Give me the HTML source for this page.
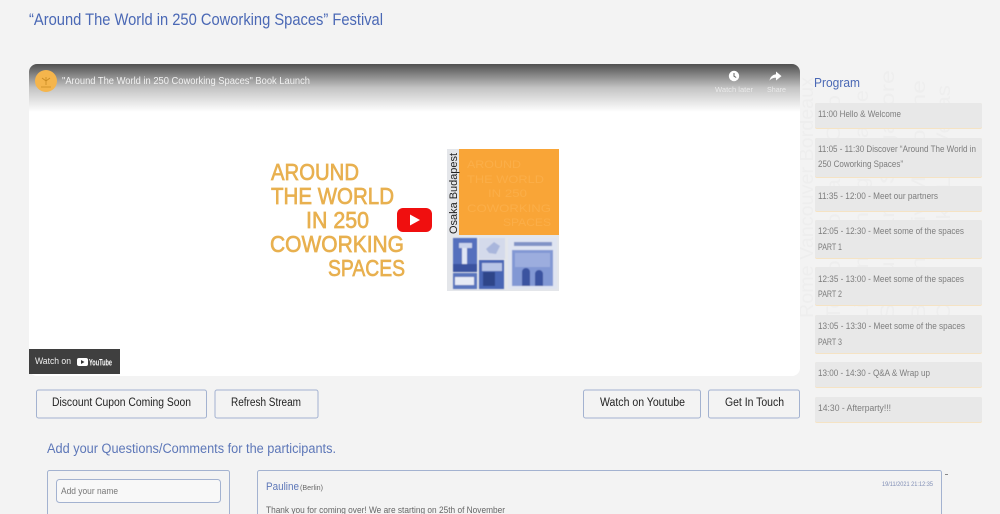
<!DOCTYPE html>
<html lang="en"><head><meta charset="utf-8"><title>Festival</title>
<style>
html,body{margin:0;padding:0;width:1000px;height:514px;overflow:hidden;background:#f3f3f3}
svg{display:block;position:absolute;left:0;top:0}
text{font-family:"Liberation Sans",sans-serif}
.s{font-size:9.3px;fill:#7d7d7d}
.b{font-size:11.5px;fill:#222}
.w{font-size:19px;fill:#eeeeee}
.box{fill:#e8e8e8}
.line{fill:#f5e3c4}
.btn{fill:#f3f3f3;stroke:#a3b2d0;stroke-width:1}
.big{font-size:23px;fill:#e8b04f;stroke:#e8b04f;stroke-width:.7px}
</style></head><body>
<svg width="1000" height="514" viewBox="0 0 1000 514" xmlns="http://www.w3.org/2000/svg">
<defs>
<linearGradient id="g" x1="0" y1="0" x2="0" y2="1"><stop offset="0" stop-color="#505050"/><stop offset=".5" stop-color="#c4c4c4"/><stop offset="1" stop-color="#fff"/></linearGradient>
<filter id="bl" x="-5%" y="-5%" width="110%" height="110%"><feGaussianBlur stdDeviation=".5"/></filter>
</defs>
<rect width="1000" height="514" fill="#f3f3f3"/>

<!-- watermark -->
<text class="w" transform="translate(813,318) rotate(-90)" textLength="241" lengthAdjust="spacingAndGlyphs">Rome Vancouver Bordeaux</text>
<text class="w" transform="translate(840,320) rotate(-90)" textLength="225" lengthAdjust="spacingAndGlyphs">Tokyo Sao Paulo Oslo</text>
<text class="w" transform="translate(868,320) rotate(-90)" textLength="230" lengthAdjust="spacingAndGlyphs">Lisbon Santiago Prague</text>
<text class="w" transform="translate(894,320) rotate(-90)" textLength="250" lengthAdjust="spacingAndGlyphs">Seoul Paris Singapore</text>
<text class="w" transform="translate(925,320) rotate(-90)" textLength="240" lengthAdjust="spacingAndGlyphs">Berlin Kyiv Melbourne</text>
<text class="w" transform="translate(950,320) rotate(-90)" textLength="235" lengthAdjust="spacingAndGlyphs">Cairo Osaka Las Vegas</text>

<text x="29" y="25" font-size="17" fill="#4a68b5" textLength="354" lengthAdjust="spacingAndGlyphs">“Around The World in 250 Coworking Spaces” Festival</text>

<!-- video -->
<rect x="29" y="64" width="771" height="312" rx="8" fill="#fff"/>
<path d="M29 112V72a8 8 0 0 1 8-8H792a8 8 0 0 1 8 8V112Z" fill="url(#g)"/>
<circle cx="46" cy="81" r="11" fill="#f5b54c"/>
<path d="M46 85v-8M42 78l4 3 4-3M41 87h10" stroke="#c98a22" stroke-width=".8" fill="none"/>
<text x="62" y="84" font-size="10" fill="#f1f1f1" textLength="248" lengthAdjust="spacingAndGlyphs">"Around The World in 250 Coworking Spaces" Book Launch</text>
<circle cx="734" cy="76" r="5.2" fill="#fff"/>
<path d="M734 73v3.2l2.2 1.3" stroke="#666" stroke-width="1" fill="none"/>
<path d="M776 71.500l5.500 4.600-5.500 4.400v-2.700c-3 0-5 .9-6.500 3 .5-3.400 2.600-6 6.500-6.600Z" fill="#fff"/>
<text x="715" y="92" font-size="7.500" fill="#e9e9e9" textLength="38" lengthAdjust="spacingAndGlyphs">Watch later</text>
<text x="767" y="92" font-size="7.500" fill="#e9e9e9" textLength="19" lengthAdjust="spacingAndGlyphs">Share</text>

<text class="big" x="271" y="180" textLength="88" lengthAdjust="spacingAndGlyphs">AROUND</text>
<text class="big" x="271" y="204" textLength="123" lengthAdjust="spacingAndGlyphs">THE WORLD</text>
<text class="big" x="306" y="228" textLength="63" lengthAdjust="spacingAndGlyphs">IN 250</text>
<text class="big" x="270" y="252" textLength="134" lengthAdjust="spacingAndGlyphs">COWORKING</text>
<text class="big" x="328" y="276" textLength="77" lengthAdjust="spacingAndGlyphs">SPACES</text>

<!-- book -->
<rect x="447" y="149" width="112" height="142" fill="#e4e6ea"/>
<rect x="459" y="149" width="100" height="86" fill="#f9a537"/>
<g font-size="11" fill="#fbae48">
<text x="467" y="168" textLength="54" lengthAdjust="spacingAndGlyphs">AROUND</text>
<text x="467" y="183" textLength="77" lengthAdjust="spacingAndGlyphs">THE WORLD</text>
<text x="488" y="197" textLength="39" lengthAdjust="spacingAndGlyphs">IN 250</text>
<text x="467" y="212" textLength="84" lengthAdjust="spacingAndGlyphs">COWORKING</text>
<text x="503" y="226" textLength="48" lengthAdjust="spacingAndGlyphs">SPACES</text>
</g>
<text transform="translate(457,234) rotate(-90)" font-size="11" fill="#222" textLength="81" lengthAdjust="spacingAndGlyphs">Osaka Budapest</text>
<g filter="url(#bl)">
<rect x="453" y="238" width="24" height="34" fill="#5470bd"/>
<rect x="459" y="243" width="13" height="5" fill="#c9d3ec"/><rect x="462" y="248" width="5" height="16" fill="#dfe5f4"/><rect x="453" y="264" width="24" height="8" fill="#3a52a0"/>
<rect x="453" y="273" width="24" height="16" fill="#5a74bd"/>
<rect x="455" y="277" width="19" height="8" fill="#e6eaf5"/>
<rect x="479" y="238" width="26" height="21" fill="#d4daeb"/>
<path d="M486 249l8-7 6 4-4 8-7-1Z" fill="#a9b6dc"/>
<rect x="479" y="260" width="25" height="29" fill="#4a66b5"/>
<rect x="482" y="263" width="20" height="8" fill="#b8c5e6"/><rect x="483" y="272" width="12" height="14" fill="#2d4589"/>
<rect x="508" y="238" width="49" height="51" fill="#dfe4f1"/>
<rect x="512" y="250" width="41" height="36" fill="#8298d4"/>
<rect x="515" y="253" width="35" height="14" fill="#9cadde"/>
<path d="M522 286v-14a4 4 0 0 1 8 0v14ZM535 286v-12a4 4 0 0 1 8 0v12Z" fill="#3a52a0"/>
<rect x="514" y="242" width="38" height="4" fill="#8193c6"/>
</g>

<!-- play -->
<rect x="397" y="208" width="35" height="24" rx="6" fill="#f00f0f"/>
<path d="M410 214.500 420 220 410 225.500Z" fill="#fff"/>

<!-- watch on -->
<rect x="29" y="349" width="91" height="25" fill="#3f3f3f"/>
<text x="35" y="364" font-size="9.500" fill="#f0f0f0" textLength="36" lengthAdjust="spacingAndGlyphs">Watch on</text>
<rect x="77" y="358" width="11" height="8" rx="2" fill="#fff"/><path d="M81 360l3.500 2-3.500 2Z" fill="#333"/>
<text x="89" y="365.500" font-size="9.500" font-weight="700" fill="#fff" textLength="23" lengthAdjust="spacingAndGlyphs">YouTube</text>

<!-- buttons -->
<rect class="btn" x="36.500" y="390" width="170" height="28" rx="2"/>
<rect class="btn" x="215" y="390" width="103" height="28" rx="2"/>
<rect class="btn" x="583.500" y="390" width="117" height="28" rx="2"/>
<rect class="btn" x="708.500" y="390" width="91" height="28" rx="2"/>
<text class="b" x="52" y="406" textLength="139" lengthAdjust="spacingAndGlyphs">Discount Cupon Coming Soon</text>
<text class="b" x="231" y="406" textLength="70" lengthAdjust="spacingAndGlyphs">Refresh Stream</text>
<text class="b" x="600" y="406" textLength="85" lengthAdjust="spacingAndGlyphs">Watch on Youtube</text>
<text class="b" x="725" y="406" textLength="59" lengthAdjust="spacingAndGlyphs">Get In Touch</text>

<!-- program -->
<text x="814" y="87" font-size="13" fill="#4a68b5" textLength="46" lengthAdjust="spacingAndGlyphs">Program</text>
<rect class="line" x="815" y="103" width="167" height="26" rx="2"/><rect class="box" x="815" y="103" width="167" height="25" rx="2"/>
<rect class="line" x="815" y="138" width="167" height="40" rx="2"/><rect class="box" x="815" y="138" width="167" height="39" rx="2"/>
<rect class="line" x="815" y="186" width="167" height="26" rx="2"/><rect class="box" x="815" y="186" width="167" height="25" rx="2"/>
<rect class="line" x="815" y="220" width="167" height="39" rx="2"/><rect class="box" x="815" y="220" width="167" height="38" rx="2"/>
<rect class="line" x="815" y="267" width="167" height="39" rx="2"/><rect class="box" x="815" y="267" width="167" height="38" rx="2"/>
<rect class="line" x="815" y="315" width="167" height="39" rx="2"/><rect class="box" x="815" y="315" width="167" height="38" rx="2"/>
<rect class="line" x="815" y="362" width="167" height="26" rx="2"/><rect class="box" x="815" y="362" width="167" height="25" rx="2"/>
<rect class="line" x="815" y="397" width="167" height="26" rx="2"/><rect class="box" x="815" y="397" width="167" height="25" rx="2"/>
<text class="s" x="818" y="117" textLength="83" lengthAdjust="spacingAndGlyphs">11:00 Hello &amp; Welcome</text>
<text class="s" x="818" y="152" textLength="158" lengthAdjust="spacingAndGlyphs">11:05 - 11:30 Discover “Around The World in</text>
<text class="s" x="818" y="167" textLength="85" lengthAdjust="spacingAndGlyphs">250 Coworking Spaces”</text>
<text class="s" x="818" y="199" textLength="120" lengthAdjust="spacingAndGlyphs">11:35 - 12:00 - Meet our partners</text>
<text class="s" x="818" y="234" textLength="146" lengthAdjust="spacingAndGlyphs">12:05 - 12:30 - Meet some of the spaces</text>
<text class="s" x="818" y="250" textLength="24" lengthAdjust="spacingAndGlyphs">PART 1</text>
<text class="s" x="818" y="282" textLength="146" lengthAdjust="spacingAndGlyphs">12:35 - 13:00 - Meet some of the spaces</text>
<text class="s" x="818" y="297" textLength="24" lengthAdjust="spacingAndGlyphs">PART 2</text>
<text class="s" x="818" y="329" textLength="147" lengthAdjust="spacingAndGlyphs">13:05 - 13:30 - Meet some of the spaces</text>
<text class="s" x="818" y="345" textLength="24" lengthAdjust="spacingAndGlyphs">PART 3</text>
<text class="s" x="818" y="376" textLength="112" lengthAdjust="spacingAndGlyphs">13:00 - 14:30 - Q&amp;A &amp; Wrap up</text>
<text class="s" x="818" y="411" textLength="73" lengthAdjust="spacingAndGlyphs">14:30 - Afterparty!!!</text>

<!-- comments -->
<text x="47" y="453" font-size="13.500" fill="#5d77b8" textLength="289" lengthAdjust="spacingAndGlyphs">Add your Questions/Comments for the participants.</text>
<rect x="47.500" y="470.500" width="182" height="60" rx="2" fill="#f3f3f3" stroke="#a3b2d0"/>
<rect x="56.500" y="479.500" width="164" height="23" rx="3" fill="#f8f8f8" stroke="#a3b2d0"/>
<text x="61" y="494" font-size="9.500" fill="#777" textLength="57" lengthAdjust="spacingAndGlyphs">Add your name</text>
<rect x="257.500" y="470.500" width="684" height="60" rx="2" fill="#f3f3f3" stroke="#a3b2d0"/>
<text x="266" y="490" font-size="11" fill="#5d77b8" textLength="33" lengthAdjust="spacingAndGlyphs">Pauline</text>
<text x="300" y="490" font-size="7" fill="#666" textLength="23" lengthAdjust="spacingAndGlyphs">(Berlin)</text>
<text x="882" y="486" font-size="6.500" fill="#7f8db5" textLength="51" lengthAdjust="spacingAndGlyphs">19/11/2021 21:12:35</text>
<text x="266" y="513" font-size="9" fill="#666" textLength="239" lengthAdjust="spacingAndGlyphs">Thank you for coming over! We are starting on 25th of November</text>
<path d="M945 474.500h3" stroke="#888" stroke-width="1"/>
</svg>
</body></html>
